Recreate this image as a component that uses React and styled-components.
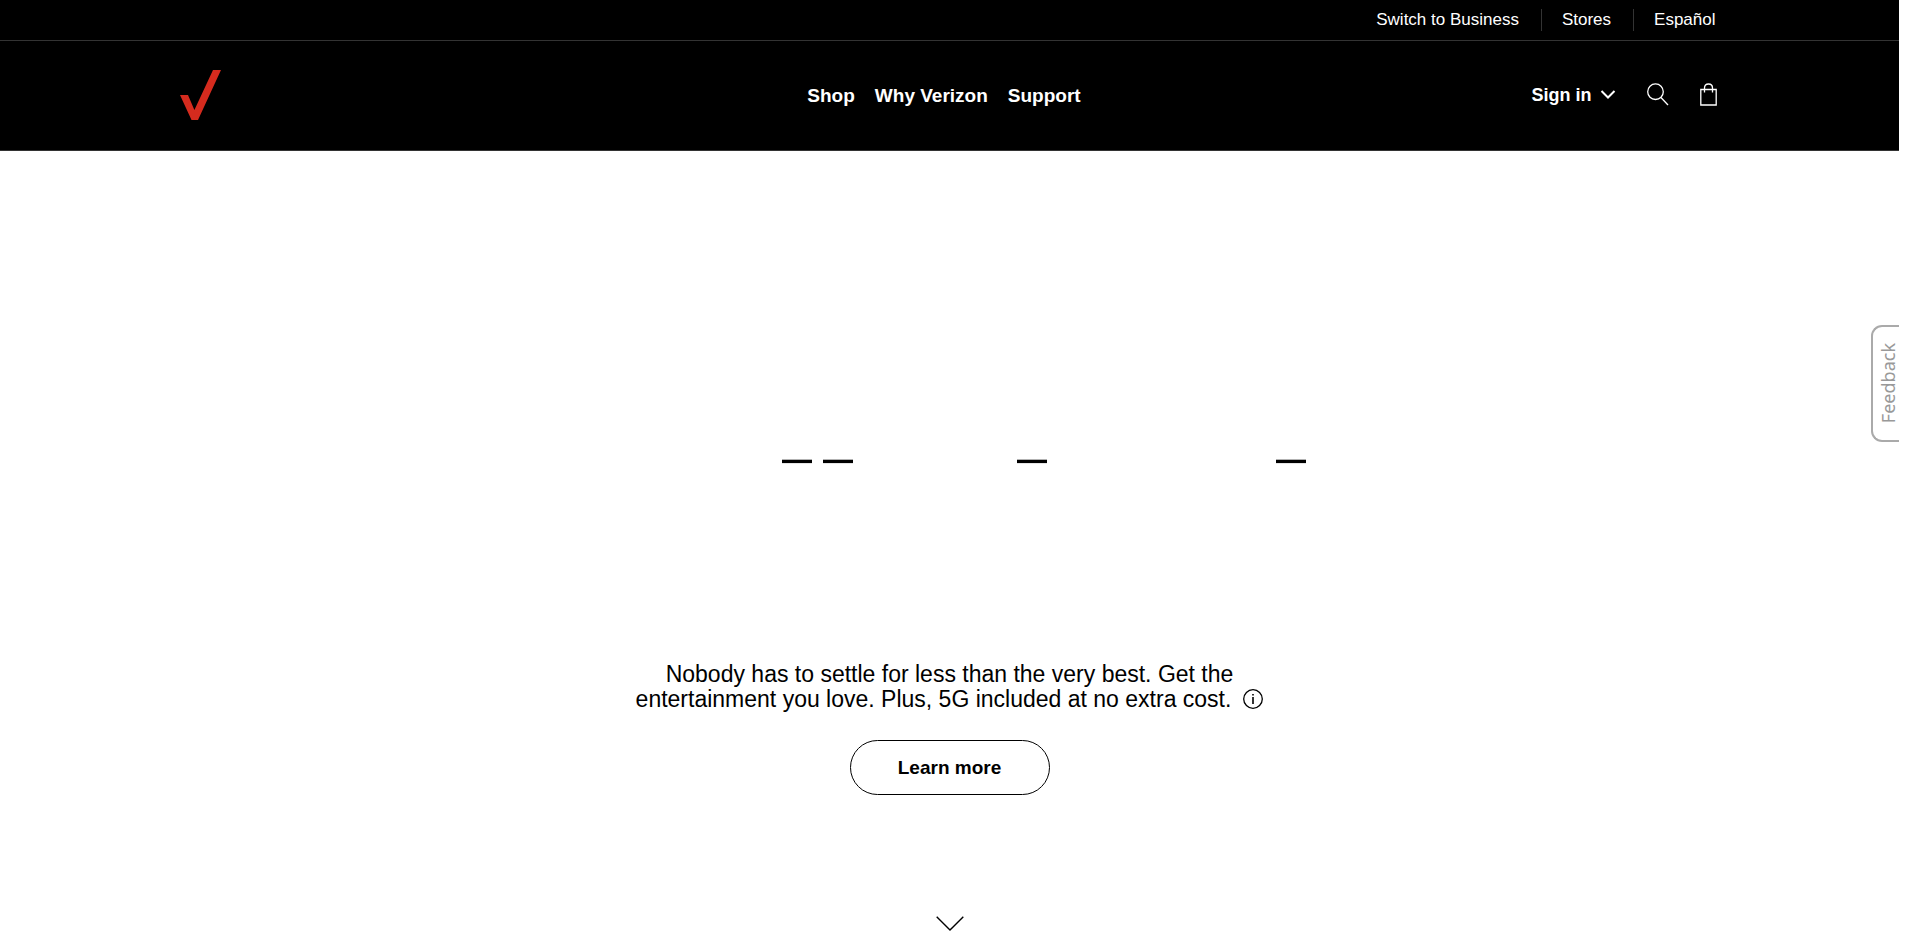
import React from "react";
import styled, { createGlobalStyle } from "styled-components";

const GlobalStyle = createGlobalStyle`
  *, *::before, *::after { box-sizing: border-box; }
  body {
    margin: 0;
    background: #fff;
    color: #000;
    font-family: "Liberation Sans", Arial, sans-serif;
  }
`;

const Page = styled.div`
  display: flex;
  flex-direction: column;
  min-height: 100vh;
  margin-right: 21px;
  position: relative;
`;

const Header = styled.header`
  background: #000;
  color: #fff;
  border-bottom: 1px solid #333;
`;

const Container = styled.div`
  width: 100%;
  max-width: 1540px;
  margin: 0 auto;
  padding-right: 3px;
`;

const UtilityBar = styled.div`
  border-bottom: 1px solid #333;
`;

const UtilityList = styled(Container)`
  display: flex;
  justify-content: flex-end;
  align-items: center;
  height: 40px;
`;

const UtilityLink = styled.a`
  color: #fff;
  font-size: 17px;
  line-height: 22px;
  text-decoration: none;
  padding: 0 1px 0 20px;

  & + & {
    margin-left: 21px;
    border-left: 1px solid #333;
  }
`;

const MainBar = styled(Container)`
  display: grid;
  grid-template-columns: 1fr auto 1fr;
  align-items: center;
  height: 109px;
`;

const LogoLink = styled.a`
  display: block;
  width: 42px;
  height: 50px;
  margin-bottom: 2px;
`;

const Nav = styled.nav`
  display: flex;
  gap: 20px;
  margin-right: 8px;
`;

const BarButton = styled.button`
  display: flex;
  align-items: center;
  gap: 8px;
  padding: 0;
  border: 0;
  background: none;
  color: #fff;
  font: bold ${(p) => (p.$small ? 18 : 19)}px / 24px "Liberation Sans", Arial, sans-serif;
  cursor: pointer;
`;

const Actions = styled.div`
  display: flex;
  justify-content: flex-end;
  align-items: center;
  gap: 31px;
  margin-bottom: 2px;
`;

const Hero = styled.main`
  flex: 1;
  display: flex;
  flex-direction: column;
  align-items: center;
  padding: 300px 0 6px;
`;

const Dashes = styled.svg`
  display: block;
  margin-bottom: 191px;
`;

const Copy = styled.p`
  margin: 0 0 28px;
  font-size: 23px;
  line-height: 25px;
  text-align: center;
`;

const InfoButton = styled.button`
  width: 20px;
  height: 20px;
  margin-left: 12px;
  padding: 0;
  border: 0;
  background: none;
  vertical-align: -2px;
  line-height: 0;
  cursor: pointer;
`;

const LearnMore = styled.button`
  width: 200px;
  height: 55px;
  border: 1px solid #000;
  border-radius: 28px;
  background: #fff;
  color: #000;
  font: bold 19px / 24px "Liberation Sans", Arial, sans-serif;
  cursor: pointer;
`;

const ScrollButton = styled.button`
  margin-top: auto;
  padding: 0;
  border: 0;
  background: none;
  line-height: 0;
  cursor: pointer;
`;

const Feedback = styled.button`
  position: absolute;
  right: 0;
  top: 325px;
  display: flex;
  align-items: center;
  justify-content: center;
  width: 28px;
  height: 117px;
  padding: 0 0 0 3px;
  border: 2px solid #aaa;
  border-right: 0;
  border-radius: 11px 0 0 11px;
  background: #fff;
  color: #999;
  font: 18px / 24px "Noto Sans", sans-serif;
  cursor: pointer;
`;

const VerticalLabel = styled.span`
  writing-mode: vertical-rl;
  transform: rotate(180deg);
`;

const utilityLinks = ["Switch to Business", "Stores", "Español"];
const navItems = ["Shop", "Why Verizon", "Support"];
const dashStarts = [212, 253, 447, 706];

export default function App() {
  return (
    <Page>
      <GlobalStyle />
      <Header>
        <UtilityBar>
          <UtilityList as="nav" aria-label="Utility">
            {utilityLinks.map((label) => (
              <UtilityLink href="#" key={label}>{label}</UtilityLink>
            ))}
          </UtilityList>
        </UtilityBar>
        <MainBar>
          <LogoLink href="#" aria-label="Verizon home">
            <svg width="42" height="50" viewBox="0 0 42 50" fill="#d52b1e">
              <path d="M33 0H41L18 50H11.5L0 25H8L14.4 40Z" />
            </svg>
          </LogoLink>
          <Nav aria-label="Main">
            {navItems.map((label) => (
              <BarButton key={label}>{label}</BarButton>
            ))}
          </Nav>
          <Actions>
            <BarButton $small>
              Sign in
              <svg width="16" height="12" viewBox="0 0 16 12" fill="none" stroke="#fff" strokeWidth="2">
                <path d="M1.5 2L8 8.5L14.5 2" />
              </svg>
            </BarButton>
            <BarButton aria-label="Search">
              <svg width="22" height="24" viewBox="0 0 22 24" fill="none" stroke="#fff" strokeWidth="1.3">
                <circle cx="8.5" cy="8.7" r="7.8" />
                <path d="M14 14.5L21 22" />
              </svg>
            </BarButton>
            <BarButton aria-label="Cart">
              <svg width="17" height="24" viewBox="0 0 17 24" fill="none" stroke="#fff" strokeWidth="1.3">
                <path d="M0.8 6.5H16.2V22H0.8ZM4.5 9.5V5Q4.5 1 8.5 1T12.5 5V9.5" />
              </svg>
            </BarButton>
          </Actions>
        </MainBar>
      </Header>
      <Hero>
        <Dashes width="760" height="20" viewBox="0 0 760 20" aria-hidden="true">
          {dashStarts.map((x) => (
            <rect key={x} x={x} y="8.7" width="30" height="3.4" />
          ))}
        </Dashes>
        <Copy>
          Nobody has to settle for less than the very best. Get the
          <br />
          entertainment you love. Plus, 5G included at no extra cost.
          <InfoButton aria-label="More information">
            <svg width="20" height="20" viewBox="0 0 20 20" fill="none" stroke="#000">
              <circle cx="10" cy="10" r="9.3" strokeWidth="1.3" />
              <path d="M10 8V15M10 5V6.5" strokeWidth="1.6" />
            </svg>
          </InfoButton>
        </Copy>
        <LearnMore>Learn more</LearnMore>
        <ScrollButton aria-label="Scroll down">
          <svg width="28" height="15" viewBox="0 0 28 15" fill="none" stroke="#000" strokeWidth="1.4">
            <path d="M0.7 0.7L14 14L27.3 0.7" />
          </svg>
        </ScrollButton>
      </Hero>
      <Feedback>
        <VerticalLabel>Feedback</VerticalLabel>
      </Feedback>
    </Page>
  );
}
